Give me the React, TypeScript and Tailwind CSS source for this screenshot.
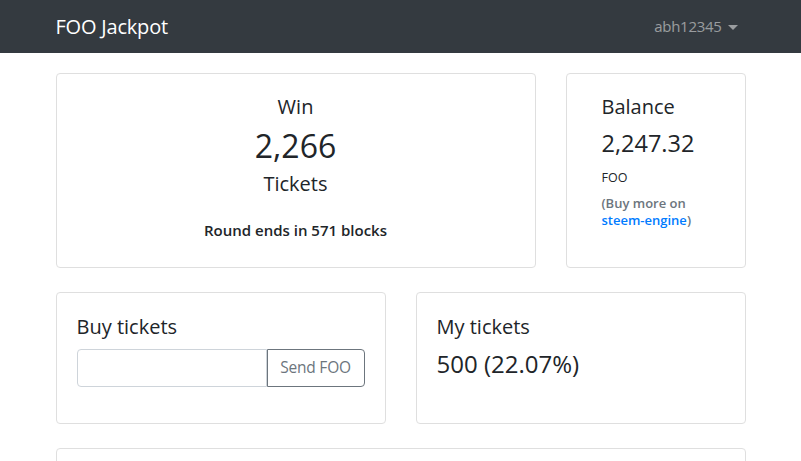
export default function App() {
  return (
    <div
      className="h-screen overflow-hidden bg-white text-[#212529]"
      style={{ fontFamily: '"Open Sans", "Noto Sans", sans-serif' }}
    >
      <nav className="h-[53px] bg-[#343a40]">
        <div className="mx-auto flex h-full w-[720px] items-center justify-between px-[15px]">
          <span className="text-[20px] tracking-[-0.2px] text-white">FOO Jackpot</span>
          <span className="flex items-center gap-[6px] pr-[8px] text-[15px] tracking-[-0.3px] text-white/50">
            abh12345
            <span className="mt-[2px] h-0 w-0 border-x-[5px] border-t-[5px] border-x-transparent border-t-white/50" />
          </span>
        </div>
      </nav>

      <div className="mx-auto w-[720px] px-[15px] pt-[20px]">
        <div className="flex gap-[30px]">
          <div className="flex h-[195px] w-[480px] flex-col items-center rounded border border-[#dfdfdf] pt-[19px]">
            <h5 className="text-[20px] font-medium leading-[28px]">Win</h5>
            <div className="mt-[6px] text-[32px] font-medium leading-[38px]">2,266</div>
            <h5 className="mt-[5px] text-[20px] font-medium leading-[28px]">Tickets</h5>
            <p className="mt-[21px] text-[15px] font-semibold">Round ends in 571 blocks</p>
          </div>
          <div className="h-[195px] flex-1 rounded border border-[#dfdfdf] pl-[35px] pt-[19px]">
            <h5 className="text-[20px] font-medium leading-[28px]">Balance</h5>
            <div className="mt-[7px] text-[23.5px] font-medium leading-[30px]">2,247.32</div>
            <div className="mt-[12px] text-[12.5px] leading-[16px]">FOO</div>
            <div className="mt-[9px] text-[13px] font-semibold leading-[17px] text-[#6c757d]">
              (Buy more on
              <br />
              <a className="text-[#007bff]">steem-engine</a>)
            </div>
          </div>
        </div>

        <div className="mt-[24px] flex gap-[30px]">
          <div className="h-[132px] flex-1 rounded border border-[#dfdfdf] p-[20px]">
            <h5 className="text-[20px] font-medium leading-[28px]">Buy tickets</h5>
            <div className="mt-[8px] flex h-[38px]">
              <input className="w-[190px] min-w-0 rounded-l border border-[#ced4da] outline-none" />
              <button className="w-[98px] shrink-0 whitespace-nowrap rounded-r border border-[#6c757d] text-[15.5px] tracking-[-0.2px] text-[#6c757d]">
                Send FOO
              </button>
            </div>
          </div>
          <div className="h-[132px] flex-1 rounded border border-[#dfdfdf] p-[20px]">
            <h5 className="text-[20px] font-medium leading-[28px]">My tickets</h5>
            <div className="mt-[8px] text-[24px] font-medium leading-[30px]">500 (22.07%)</div>
          </div>
        </div>

        <div className="mt-[24px] h-[60px] rounded border border-[#dfdfdf]" />
      </div>
    </div>
  );
}
